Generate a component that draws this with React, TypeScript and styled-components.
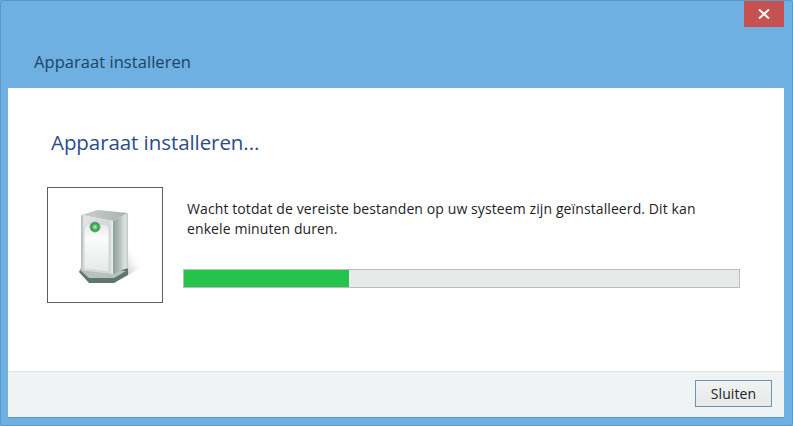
import styled, { createGlobalStyle } from "styled-components";

const GlobalStyle = createGlobalStyle`
  html, body {
    margin: 0;
    padding: 0;
    background: #6fb0e2;
  }
`;

const Window = styled.div`
  box-sizing: border-box;
  width: 793px;
  height: 426px;
  display: flex;
  flex-direction: column;
  background: #6fb0e2;
  border: 1px solid #5b97c9;
  border-radius: 3px;
  font-family: "Open Sans", "Noto Sans", sans-serif;
  overflow: hidden;
`;

const TitleBar = styled.header`
  height: 87px;
  flex: none;
  display: flex;
  justify-content: space-between;
  align-items: flex-start;
  padding: 0 8px 0 33px;
`;

const WindowTitle = styled.h1`
  margin: 49px 0 0;
  font-size: 16.5px;
  line-height: 24px;
  font-weight: 400;
  letter-spacing: 0.05px;
  color: #1d4460;
`;

const CloseButton = styled.button`
  width: 40px;
  height: 26px;
  padding: 0;
  border: 0;
  display: flex;
  align-items: center;
  justify-content: center;
  background: #c75050;
`;

const Panel = styled.main`
  flex: 1;
  margin: 0 8px 8px 7px;
  display: flex;
  flex-direction: column;
  background: #ffffff;
  box-shadow: 0 1px 0 #5b97c9;
`;

const Content = styled.section`
  flex: 1;
  padding: 38px 44px 0 39px;
`;

const Heading = styled.h2`
  margin: 0 0 29px 4px;
  font-size: 20.5px;
  line-height: 32px;
  font-weight: 400;
  letter-spacing: -0.07px;
  color: #2b4b8c;
`;

const InstallRow = styled.div`
  display: flex;
  align-items: flex-start;
  gap: 20px;
`;

const DeviceFrame = styled.div`
  box-sizing: border-box;
  width: 116px;
  height: 116px;
  flex: none;
  display: flex;
  border: 1px solid #5a5f60;
`;

const Details = styled.div`
  flex: 1;
  padding-top: 12px;
`;

const Message = styled.p`
  margin: 0 0 30px 4px;
  font-size: 14px;
  line-height: 20px;
  letter-spacing: 0.1px;
  white-space: nowrap;
  color: #1c2326;
`;

const ProgressTrack = styled.div`
  box-sizing: border-box;
  height: 19px;
  background: #e6eae8;
  border: 1px solid #b9bebc;
`;

const ProgressFill = styled.div`
  height: 100%;
  background: #25c34c;
`;

const Footer = styled.footer`
  box-sizing: border-box;
  height: 46px;
  flex: none;
  display: flex;
  justify-content: flex-end;
  align-items: flex-start;
  padding: 8px 12px 0 0;
  background: #f0f3f3;
  border-top: 1px solid #dfe6e6;
`;

const DialogButton = styled.button`
  box-sizing: border-box;
  width: 77px;
  height: 27px;
  padding: 0;
  background: linear-gradient(#f1f3f3, #e6e9e7);
  border: 1px solid #6d94b5;
  font-family: inherit;
  font-size: 14px;
  letter-spacing: 0.1px;
  color: #1c2326;
`;

const CloseIcon = () => (
  <svg width="12" height="10" viewBox="0 0 12 10">
    <path d="M1 0.5 L11 9.5 M11 0.5 L1 9.5" stroke="#ffffff" strokeWidth="2" fill="none" />
  </svg>
);

const DeviceIcon = () => (
  <svg width="114" height="114" viewBox="0 0 114 114">
    <defs>
      <linearGradient id="top" x1="0" y1="0" x2="1" y2="0">
        <stop offset="0" stopColor="#c9cfcd" />
        <stop offset="1" stopColor="#a9b3af" />
      </linearGradient>
      <linearGradient id="front" x1="0" y1="0" x2="1" y2="0">
        <stop offset="0" stopColor="#aeb6b3" />
        <stop offset="0.1" stopColor="#e2e5e4" />
        <stop offset="0.9" stopColor="#d4d8d7" />
        <stop offset="1" stopColor="#eef0ef" />
      </linearGradient>
      <linearGradient id="side" x1="0" y1="0" x2="1" y2="0">
        <stop offset="0" stopColor="#8f9f99" />
        <stop offset="0.45" stopColor="#b4c0bb" />
        <stop offset="0.8" stopColor="#dde3e0" />
        <stop offset="1" stopColor="#c2cac7" />
      </linearGradient>
      <linearGradient id="panel" x1="0" y1="0" x2="0" y2="1">
        <stop offset="0" stopColor="#e3e7e7" />
        <stop offset="0.3" stopColor="#fbfcfc" />
        <stop offset="1" stopColor="#e6e9e8" />
      </linearGradient>
      <radialGradient id="led">
        <stop offset="0" stopColor="#c4f5b4" />
        <stop offset="0.5" stopColor="#4fc257" />
        <stop offset="1" stopColor="#1f7a3e" />
      </radialGradient>
      <linearGradient id="shadow" x1="0" y1="1" x2="1" y2="0">
        <stop offset="0" stopColor="#a6aeac" stopOpacity="0.6" />
        <stop offset="0.7" stopColor="#ffffff" stopOpacity="0" />
      </linearGradient>
    </defs>
    <path d="M80 60 L96 78 L80 87 Z" fill="url(#shadow)" />
    <path d="M31 84 L41 95 L66 95 L80 87 L80 80 L66 84 L33 80 Z" fill="#5f7570" />
    <path d="M32 82 L41 90 L66 90 L78 83 L66 82 L34 79 Z" fill="#b7c2be" />
    <path d="M33 27 L50 22 L80 25 L65 33 Z" fill="url(#top)" />
    <path d="M33 27 L65 33 L65 86 L33 82 Z" fill="url(#front)" />
    <path d="M65 33 L80 25 L80 79 L66 86 L65 86 Z" fill="url(#side)" />
    <path d="M36 42 Q36 35 43 35 L55 36 Q61 36 61 42 L61 84 L36 81 Z" fill="url(#panel)" stroke="#c6cbca" strokeWidth="0.6" />
    <circle cx="47" cy="39" r="5" fill="url(#led)" stroke="#8aa692" strokeWidth="1" />
  </svg>
);

const App = () => {
  return (
    <>
      <GlobalStyle />
      <Window>
        <TitleBar>
          <WindowTitle>Apparaat installeren</WindowTitle>
          <CloseButton aria-label="Sluiten">
            <CloseIcon />
          </CloseButton>
        </TitleBar>
        <Panel>
          <Content>
            <Heading>Apparaat installeren...</Heading>
            <InstallRow>
              <DeviceFrame>
                <DeviceIcon />
              </DeviceFrame>
              <Details>
                <Message>
                  Wacht totdat de vereiste bestanden op uw systeem zijn geïnstalleerd. Dit kan
                  <br />
                  enkele minuten duren.
                </Message>
                <ProgressTrack>
                  <ProgressFill style={{ width: "29.7%" }} />
                </ProgressTrack>
              </Details>
            </InstallRow>
          </Content>
          <Footer>
            <DialogButton>Sluiten</DialogButton>
          </Footer>
        </Panel>
      </Window>
    </>
  );
};

export default App;
